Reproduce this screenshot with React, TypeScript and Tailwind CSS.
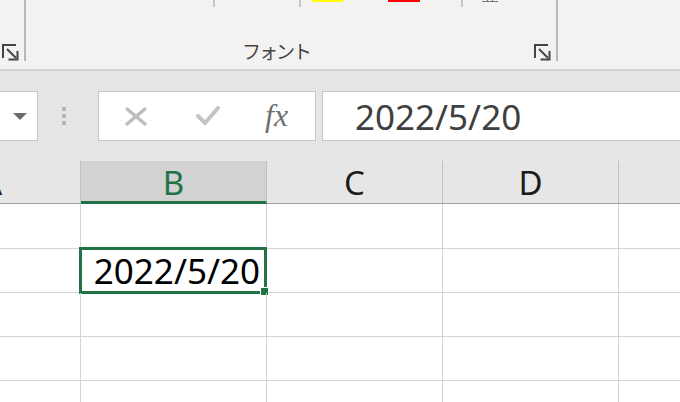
import React from "react";

const GREEN = "#217346";

// リボンのダイアログ起動ツールアイコン
function Launcher() {
  return (
    <svg width="18" height="17" viewBox="0 0 18 17" fill="none" stroke="#444" strokeWidth="2">
      <path d="M0 1 H14 M1 0 V14" />
      <path d="M5 5 L14 14" />
      <path d="M15.5 7 V16 M16.5 15.5 H6.5" />
    </svg>
  );
}

function Ribbon() {
  return (
    <div className="flex h-[71px] bg-[#f3f2f1] border-b-2 border-[#d3d3d3]">
      <div className="w-[24px] h-[61px] flex flex-col justify-end pl-[2px]">
        <Launcher />
      </div>
      <div className="w-[2px] h-[61px] bg-[#b8b8b8]" />
      <div className="w-[530px] h-[61px] flex flex-col">
        <div className="h-[7px] flex items-start">
          <div className="w-[187px]" />
          <div className="w-[2px] h-[7px] bg-[#c8c8c8]" />
          <div className="w-[84px]" />
          <div className="w-[2px] h-[7px] bg-[#c8c8c8]" />
          <div className="w-[11px]" />
          <div className="w-[31px] h-[2px] bg-[#ffff00]" />
          <div className="w-[45px]" />
          <div className="w-[32px] h-[2px] bg-[#ff0000]" />
          <div className="w-[41px]" />
          <div className="w-[2px] h-[7px] bg-[#c8c8c8]" />
          <div className="w-[19px]" />
          <svg width="16" height="3" viewBox="0 0 16 3" stroke="#777" strokeWidth="1">
            <path d="M0 1.5 H16 M5.5 0 V1.5 M10.5 0 V1.5" />
          </svg>
        </div>
        <div className="flex-1" />
        <div className="flex items-end">
          <span
            className="pl-[216px] text-[19px] leading-[22px] tracking-[-2px] text-[#444] mb-[-1px]"
            style={{ fontFamily: '"Noto Sans CJK JP", "Noto Sans", sans-serif' }}
          >
            フォント
          </span>
          <div className="ml-auto mr-[4px]">
            <Launcher />
          </div>
        </div>
      </div>
      <div className="w-[2px] h-[61px] bg-[#b8b8b8]" />
    </div>
  );
}

function FormulaBar() {
  return (
    <div className="h-[90px] bg-[#e6e6e6] pt-[20px] flex items-start">
      {/* 名前ボックス */}
      <div className="w-[38px] h-[50px] bg-white border-y border-r border-[#c6c6c6] flex items-center justify-end pr-[10px]">
        <svg width="14" height="7" viewBox="0 0 14 7">
          <polygon points="0,0 14,0 7,7" fill="#6b6b6b" />
        </svg>
      </div>
      <div className="w-[60px] h-[50px] flex flex-col items-center justify-center gap-[3px] pr-[8px]">
        <div className="w-[4px] h-[4px] bg-[#b4b4b4]" />
        <div className="w-[4px] h-[4px] bg-[#b4b4b4]" />
        <div className="w-[4px] h-[4px] bg-[#b4b4b4]" />
      </div>
      {/* キャンセル・入力・関数 */}
      <div className="w-[218px] h-[50px] bg-white border border-[#c6c6c6] flex items-center">
        <div className="w-[25px]" />
        <svg width="24" height="21" viewBox="0 0 24 21" stroke="#bdbdbd" strokeWidth="3.5" strokeLinecap="round">
          <path d="M3 3 L21 18 M21 3 L3 18" />
        </svg>
        <div className="w-[47px]" />
        <svg width="26" height="24" viewBox="0 0 26 24" fill="none" stroke="#c4c4c4" strokeWidth="4" strokeLinecap="round" strokeLinejoin="round">
          <path d="M3 12 L10 19 L23 4" />
        </svg>
        <div className="w-[44px]" />
        <span
          className="italic text-[32px] leading-none text-[#707070] mt-[-2px]"
          style={{ fontFamily: '"Liberation Serif", serif' }}
        >
          fx
        </span>
      </div>
      <div className="w-[6px]" />
      <div className="flex-1 h-[50px] bg-white border-y border-l border-[#c6c6c6] flex items-center pl-[32px]">
        <span className="text-[35px] leading-none text-[#404040]">2022/5/20</span>
      </div>
    </div>
  );
}

const cols = [
  { name: "A", w: "w-[81px]" },
  { name: "B", w: "w-[186px]" },
  { name: "C", w: "w-[176px]" },
  { name: "D", w: "w-[176px]" },
];

function HeaderRow() {
  return (
    <div className="flex h-[43px] bg-[#e6e6e6]">
      <div className="w-[81px] border-r border-[#c0c0c0] border-b border-b-[#a0a0a0] overflow-hidden flex items-center">
        <span className="text-[33px] leading-none ml-[-19px] text-[#1a1a1a]">A</span>
      </div>
      <div className="w-[186px] border-r border-[#c0c0c0] bg-[#d2d2d2] border-b-[3px] border-b-[#217346] flex items-center justify-center pt-[2px]">
        <span className="text-[33px] leading-none text-[#217346]">B</span>
      </div>
      <div className="w-[176px] border-r border-[#c0c0c0] border-b border-b-[#a0a0a0] flex items-center justify-center">
        <span className="text-[33px] leading-none text-[#1a1a1a]">C</span>
      </div>
      <div className="w-[176px] border-r border-[#c0c0c0] border-b border-b-[#a0a0a0] flex items-center justify-center">
        <span className="text-[33px] leading-none text-[#1a1a1a]">D</span>
      </div>
      <div className="flex-1 border-b border-[#a0a0a0]" />
    </div>
  );
}

function GridRow({ h, selected }: { h: string; selected?: boolean }) {
  return (
    <div className={`flex ${h} border-b border-[#d4d4d4]`}>
      {cols.map((c) => (
        <div key={c.name} className={`${c.w} border-r border-[#d4d4d4] relative`}>
          {selected && c.name === "B" && (
            <>
              <div className="h-full flex items-center justify-end pr-[6px]">
                <span className="text-[35px] leading-none text-black">2022/5/20</span>
              </div>
              <div
                className="absolute left-[-2px] top-[-2px] right-[-1px] bottom-[-2px] border-[3px]"
                style={{ borderColor: GREEN }}
              />
              <div
                className="absolute right-[-3px] bottom-[-4px] w-[9px] h-[9px] border border-white"
                style={{ backgroundColor: GREEN }}
              />
            </>
          )}
        </div>
      ))}
      <div className="flex-1" />
    </div>
  );
}

export default function App() {
  return (
    <div
      className="w-[680px] h-[402px] overflow-hidden bg-white"
      style={{ fontFamily: '"Noto Sans", "Noto Sans CJK JP", sans-serif' }}
    >
      <Ribbon />
      <FormulaBar />
      <HeaderRow />
      <GridRow h="h-[45px]" />
      <GridRow h="h-[44px]" selected />
      <GridRow h="h-[44px]" />
      <GridRow h="h-[44px]" />
      <GridRow h="h-[44px]" />
    </div>
  );
}
